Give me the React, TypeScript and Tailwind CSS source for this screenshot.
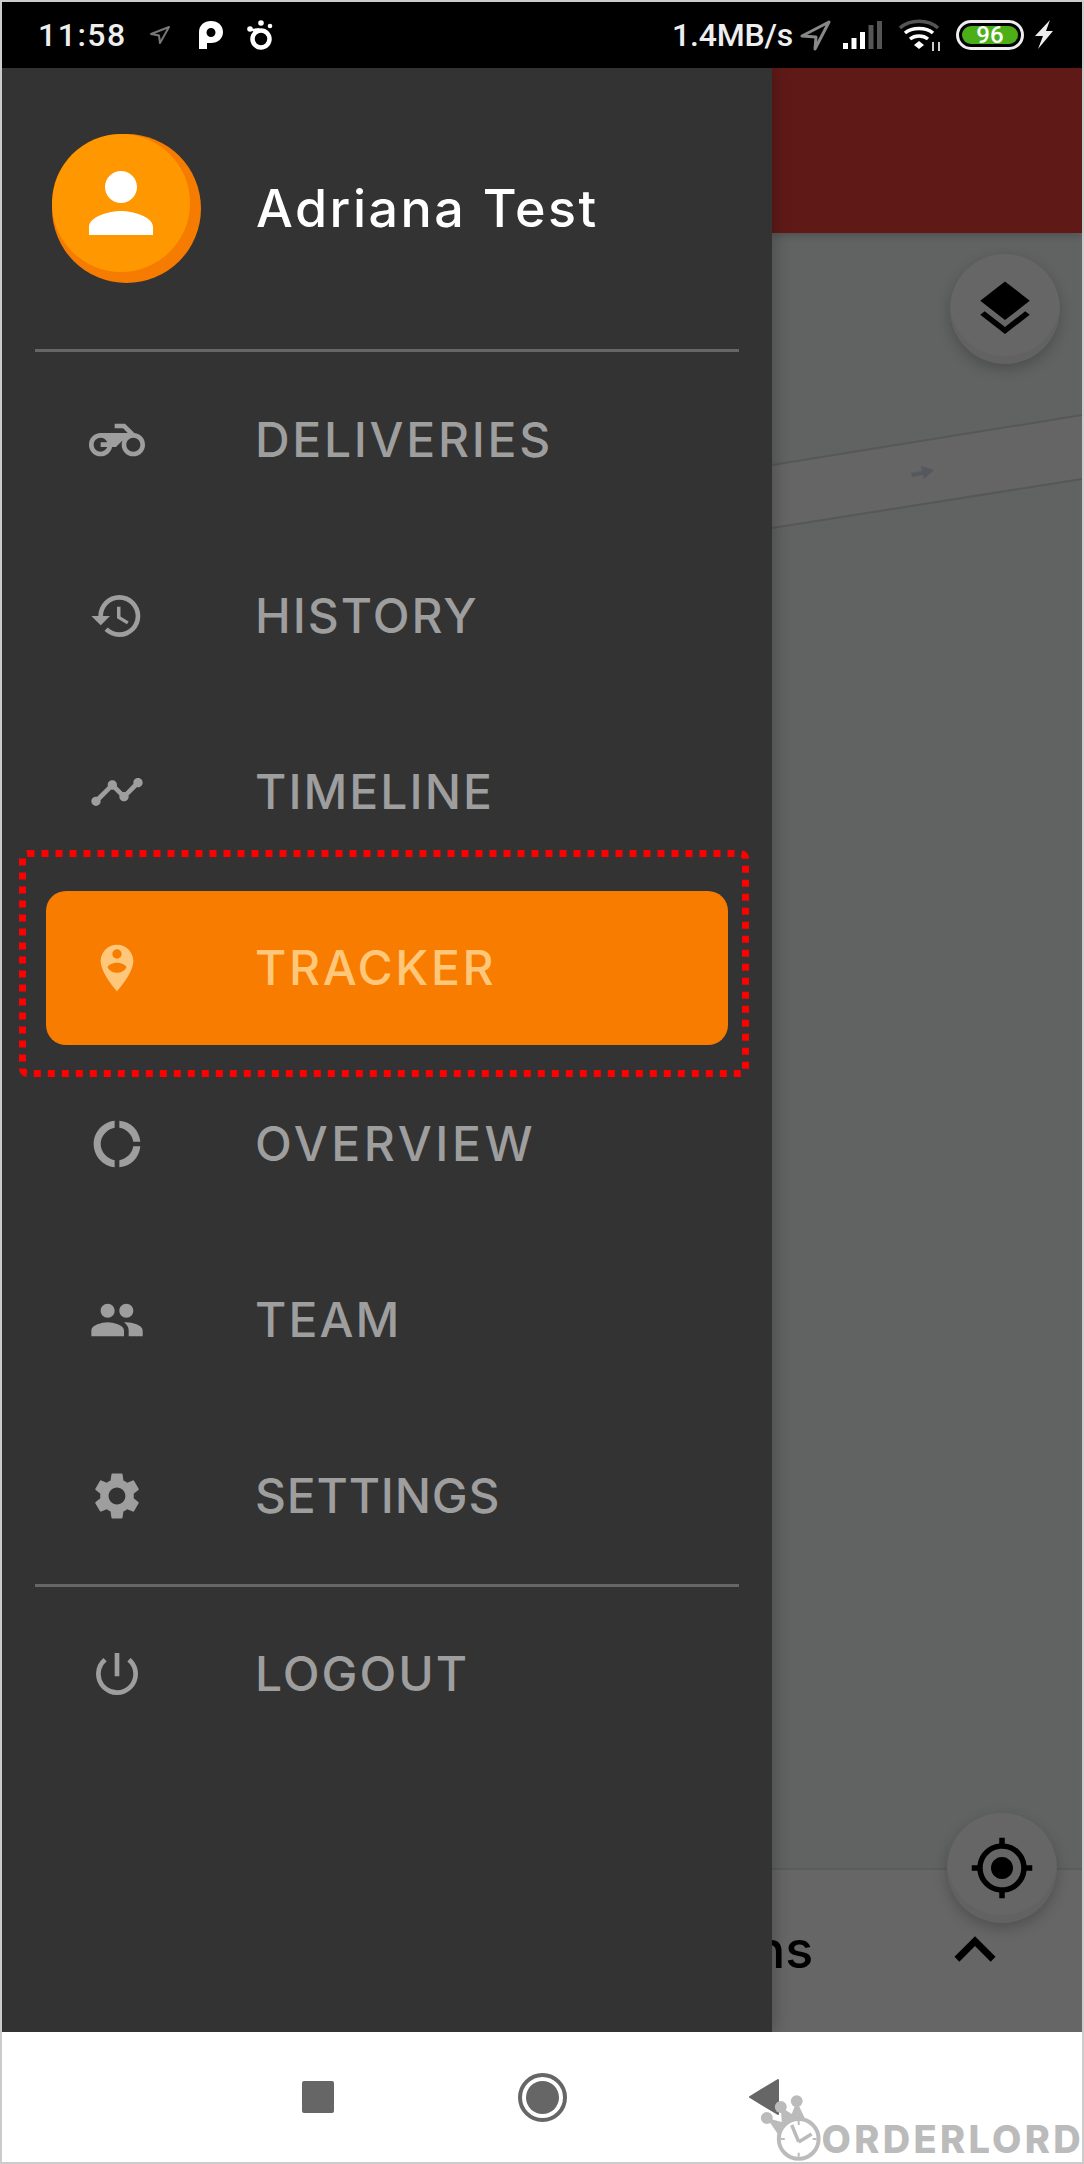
import React from "react";
import {
  MdHistory,
  MdTimeline,
  MdPersonPinCircle,
  MdDonutLarge,
  MdPeople,
  MdSettings,
  MdPowerSettingsNew,
  MdLayers,
  MdGpsFixed,
  MdExpandLess,
  MdPerson,
} from "react-icons/md";

function MdMotorcycle({ size }: { size?: number }) {
  return (
    <svg width={size} height={size} viewBox="0 0 24 24" fill="currentColor">
      <path d="M19.44 9.03L15.41 5H11v2h3.59l2 2H5c-2.8 0-5 2.2-5 5s2.2 5 5 5c2.46 0 4.45-1.69 4.9-4h1.65l2.77-2.77c-.21.54-.32 1.14-.32 1.77 0 2.8 2.2 5 5 5s5-2.2 5-5c0-2.65-1.97-4.77-4.56-4.97zM7.820 15C7.400 16.150 6.300 17 5 17c-1.630 0-3-1.370-3-3s1.370-3 3-3c1.300 0 2.400.850 2.820 2H5v2h2.820zM19 17c-1.660 0-3-1.340-3-3s1.340-3 3-3 3 1.340 3 3-1.340 3-3 3z" />
    </svg>
  );
}

const items = [
  { label: "DELIVERIES", Icon: MdMotorcycle, track: "tracking-[2.7px]" },
  { label: "HISTORY", Icon: MdHistory, track: "tracking-[2px]" },
  { label: "TIMELINE", Icon: MdTimeline, track: "tracking-[2.05px]" },
  { label: "TRACKER", Icon: MdPersonPinCircle, active: true, track: "tracking-[2.6px]" },
  { label: "OVERVIEW", Icon: MdDonutLarge, track: "tracking-[3.6px]" },
  { label: "TEAM", Icon: MdPeople, track: "tracking-[2.05px]" },
  { label: "SETTINGS", Icon: MdSettings, track: "tracking-[0.8px]" },
];

function Row({ label, Icon, active, track }: { label: string; Icon: React.ComponentType<{ size?: number }>; active?: boolean; track: string }) {
  if (active) {
    return (
      <div className="mx-[44px] my-[11px] flex h-[154px] items-center rounded-[20px] bg-[#f87c00] pl-[43px] text-[#ffc77a]">
        <span className="flex w-[56px] justify-center"><Icon size={56} /></span>
        <span className={`ml-[110px] text-[48px] leading-none font-medium ${track}`}>{label}</span>
      </div>
    );
  }
  return (
    <div className="flex h-[176px] items-center pl-[87px] text-[#9e9e9e]">
      <span className="flex w-[56px] justify-center"><Icon size={56} /></span>
      <span className={`ml-[110px] text-[48px] leading-none font-medium ${track}`}>{label}</span>
    </div>
  );
}

function StatusBar() {
  return (
    <div className="flex h-[66px] shrink-0 items-center bg-black font-['Roboto',sans-serif] text-[32px] font-medium text-[#eeeeee]">
      <span className="ml-[36px] leading-none tracking-[1.5px]">11:58</span>
      <svg className="ml-[22px]" width="22" height="20" viewBox="0 0 22 20" fill="none">
        <path d="M20 2 L2 9 L10 10.500 L11 18 Z" stroke="#777" strokeWidth="2" strokeLinejoin="round" />
      </svg>
      <svg className="ml-[27px]" width="26" height="30" viewBox="0 0 26 30">
        <path fillRule="evenodd" fill="#fff" d="M1 29V12C1 5.500 6 1 13 1s12 4.500 12 11-5 11-12 11H9v6H1ZM13 8a4.500 4.500 0 1 0 0 9 4.500 4.500 0 0 0 0-9Z" />
      </svg>
      <svg className="ml-[22px]" width="30" height="30" viewBox="0 0 30 30">
        <circle cx="15" cy="19" r="8.500" fill="none" stroke="#fff" strokeWidth="4.500" />
        <circle cx="4" cy="9" r="2.800" fill="#fff" />
        <circle cx="15" cy="3" r="2.800" fill="#fff" />
        <path d="M4 9 L9 13 L14 8 Z" fill="#fff" />
        <circle cx="24" cy="6" r="2.300" fill="#fff" />
      </svg>
      <span className="ml-auto leading-none tracking-[-0.2px]">1.4MB/s</span>
      <svg className="ml-[6px]" width="32" height="32" viewBox="0 0 32 32" fill="none">
        <path d="M30 3 L3 17 L17 18 L16 30 Z" stroke="#888" strokeWidth="3" strokeLinejoin="round" />
      </svg>
      <svg className="ml-[11px]" width="42" height="30" viewBox="0 0 42 30">
        <rect x="1" y="23" width="5" height="6" fill="#fff" />
        <rect x="9.500" y="18" width="5" height="11" fill="#fff" />
        <rect x="18" y="12" width="5" height="17" fill="#fff" />
        <rect x="26.500" y="5" width="5" height="24" fill="#555" />
        <rect x="35" y="1" width="5" height="28" fill="#555" />
      </svg>
      <svg className="ml-[14px]" width="46" height="34" viewBox="0 0 46 34" fill="none">
        <path d="M2 10 C12 1 30 1 40 10" stroke="#555" strokeWidth="3.500" />
        <path d="M7 15 C14 9 28 9 35 15" stroke="#fff" strokeWidth="3.500" />
        <path d="M12 21 C17 17 25 17 30 21" stroke="#fff" strokeWidth="3.500" />
        <path d="M16 27 L21 23 L26 27 L21 31 Z" fill="#fff" />
        <path d="M35 24v9M41 24v9" stroke="#ccc" strokeWidth="2" />
      </svg>
      <div className="ml-[12px] flex h-[30px] w-[68px] items-center rounded-[15px] border-[3px] border-[#eeeeee] p-[3px]">
        <div className="flex h-full w-full items-center justify-center rounded-[9px] bg-[#4caf17] text-[24px] leading-none text-white">96</div>
      </div>
      <svg className="mr-[28px] ml-[10px]" width="20" height="30" viewBox="0 0 20 30">
        <path d="M16 0 L1 16 L9 16 L4 29 L19 11 L12 11 Z" fill="#eee" />
      </svg>
    </div>
  );
}

export default function App() {
  return (
    <div className="relative flex h-[2164px] w-[1084px] flex-col overflow-hidden border-2 border-[#cccccc] font-['Inter',sans-serif]">
      <StatusBar />
      <div className="flex min-h-0 flex-1">
        <aside className="relative z-10 w-[770px] shrink-0 bg-[#333333] shadow-[4px_0_14px_rgba(0,0,0,0.2)]">
          <div className="flex h-[281px] items-center pl-[50px]">
            <div className="relative h-[149px] w-[149px] rounded-full bg-[#f57c00]">
              <div className="flex h-[138px] w-[138px] items-center justify-center rounded-full bg-[#ff9800] text-white">
                <MdPerson size={96} />
              </div>
            </div>
            <span className="ml-[55px] text-[52px] leading-none font-medium tracking-[2.500px] text-white">Adriana Test</span>
          </div>
          <div className="mx-[33px] h-[3px] bg-[#666666]" />
          {items.map((it) => (
            <Row key={it.label} {...it} />
          ))}
          <div className="mx-[33px] h-[3px] bg-[#666666]" />
          <div className="flex h-[174px] items-center pl-[87px] text-[#9e9e9e]">
            <span className="flex w-[56px] justify-center"><MdPowerSettingsNew size={56} /></span>
            <span className="ml-[110px] text-[48px] leading-none font-medium tracking-[2px]">LOGOUT</span>
          </div>
        </aside>
        <div className="flex min-w-0 flex-1 flex-col">
          <div className="relative z-[1] h-[165px] shrink-0 bg-[#5f1a18] shadow-[0_2px_8px_rgba(0,0,0,0.2)]" />
          <div className="relative flex-1 bg-[#616362]">
            <svg className="absolute inset-0 h-full w-full" viewBox="0 0 310 1635" preserveAspectRatio="none">
              <path d="M0 232 L310 182 L310 246 L0 295 Z" fill="#646564" />
              <path d="M0 232 L310 182" stroke="#565857" strokeWidth="2" fill="none" />
              <path d="M0 295 L310 246" stroke="#565857" strokeWidth="2" fill="none" />
              <path d="M139 240 L150 238 L149 233 L162 237 L152 246 L151 242 L140 244 Z" fill="#55585e" />
            </svg>
            <div className="absolute top-[21px] right-[22px] flex h-[110px] w-[110px] items-center justify-center rounded-full bg-[#666666] text-black shadow-[0_5px_14px_rgba(0,0,0,0.22),inset_0_-8px_0_rgba(0,0,0,0.03)]">
              <MdLayers size={66} />
            </div>
            <div className="absolute right-[25px] bottom-[-55px] z-[2] flex h-[110px] w-[110px] items-center justify-center rounded-full bg-[#666666] text-black shadow-[0_5px_14px_rgba(0,0,0,0.22),inset_0_-8px_0_rgba(0,0,0,0.03)]">
              <MdGpsFixed size={66} />
            </div>
          </div>
          <div className="flex h-[164px] shrink-0 items-center overflow-hidden border-t-2 border-[#5a5b5a] bg-[#666666] pb-[2px] text-black">
            <span className="-ml-[18px] text-[52px] leading-none font-medium">ns</span>
            <span className="mr-[66px] ml-auto flex"><MdExpandLess size={82} /></span>
          </div>
        </div>
      </div>
      <div className="relative z-[11] flex h-[130px] shrink-0 items-center bg-white">
        <div className="ml-[300px] h-[32px] w-[32px] rounded-[2px] bg-[#666666]" />
        <div className="ml-[184px] flex h-[49px] w-[49px] items-center justify-center rounded-full border-[4px] border-[#666666]">
          <div className="h-[33px] w-[33px] rounded-full bg-[#666666]" />
        </div>
        <svg className="relative z-20 ml-[181px]" width="32" height="38" viewBox="0 0 32 38">
          <path d="M30 2 L2 19 L30 36 Z" fill="#666" stroke="#666" strokeWidth="2" strokeLinejoin="round" />
        </svg>
      </div>

      {/* annotation and watermark drawn over the screenshot */}
      <svg className="pointer-events-none absolute top-[848px] left-[17px] z-20" width="732" height="230" viewBox="0 0 732 230" fill="none">
        <rect x="3.500" y="3.500" width="723" height="220" rx="5" stroke="#ff0000" strokeWidth="7" strokeDasharray="7 7" />
      </svg>
      <div className="pointer-events-none absolute top-[2080px] left-[738px] z-[12] flex h-[82px] w-[344px] items-end">
        <svg width="84" height="80" viewBox="0 0 84 80" fill="none">
          <path d="M27 34 L42 38 L41 23 L52 30 L57 17 L65 34 L45 42 L38 50 Z" fill="#bbb" />
          <circle cx="27" cy="34" r="6" fill="#bbb" />
          <circle cx="41" cy="23" r="6" fill="#bbb" />
          <circle cx="57" cy="17" r="6" fill="#bbb" />
          <circle cx="59" cy="55" r="20" fill="#fff" stroke="#bbb" strokeWidth="4" />
          <path d="M59 58 L52 41 M59 58 L72 50" stroke="#bbb" strokeWidth="3.500" />
          <path d="M59 37v4M59 69v4M41 55h4M73 55h4" stroke="#bbb" strokeWidth="2" />
        </svg>
        <span className="mb-[6px] -ml-[2px] text-[38px] leading-none font-extrabold tracking-[3.300px] text-[#bbbbbb]">ORDERLORD</span>
      </div>
    </div>
  );
}
